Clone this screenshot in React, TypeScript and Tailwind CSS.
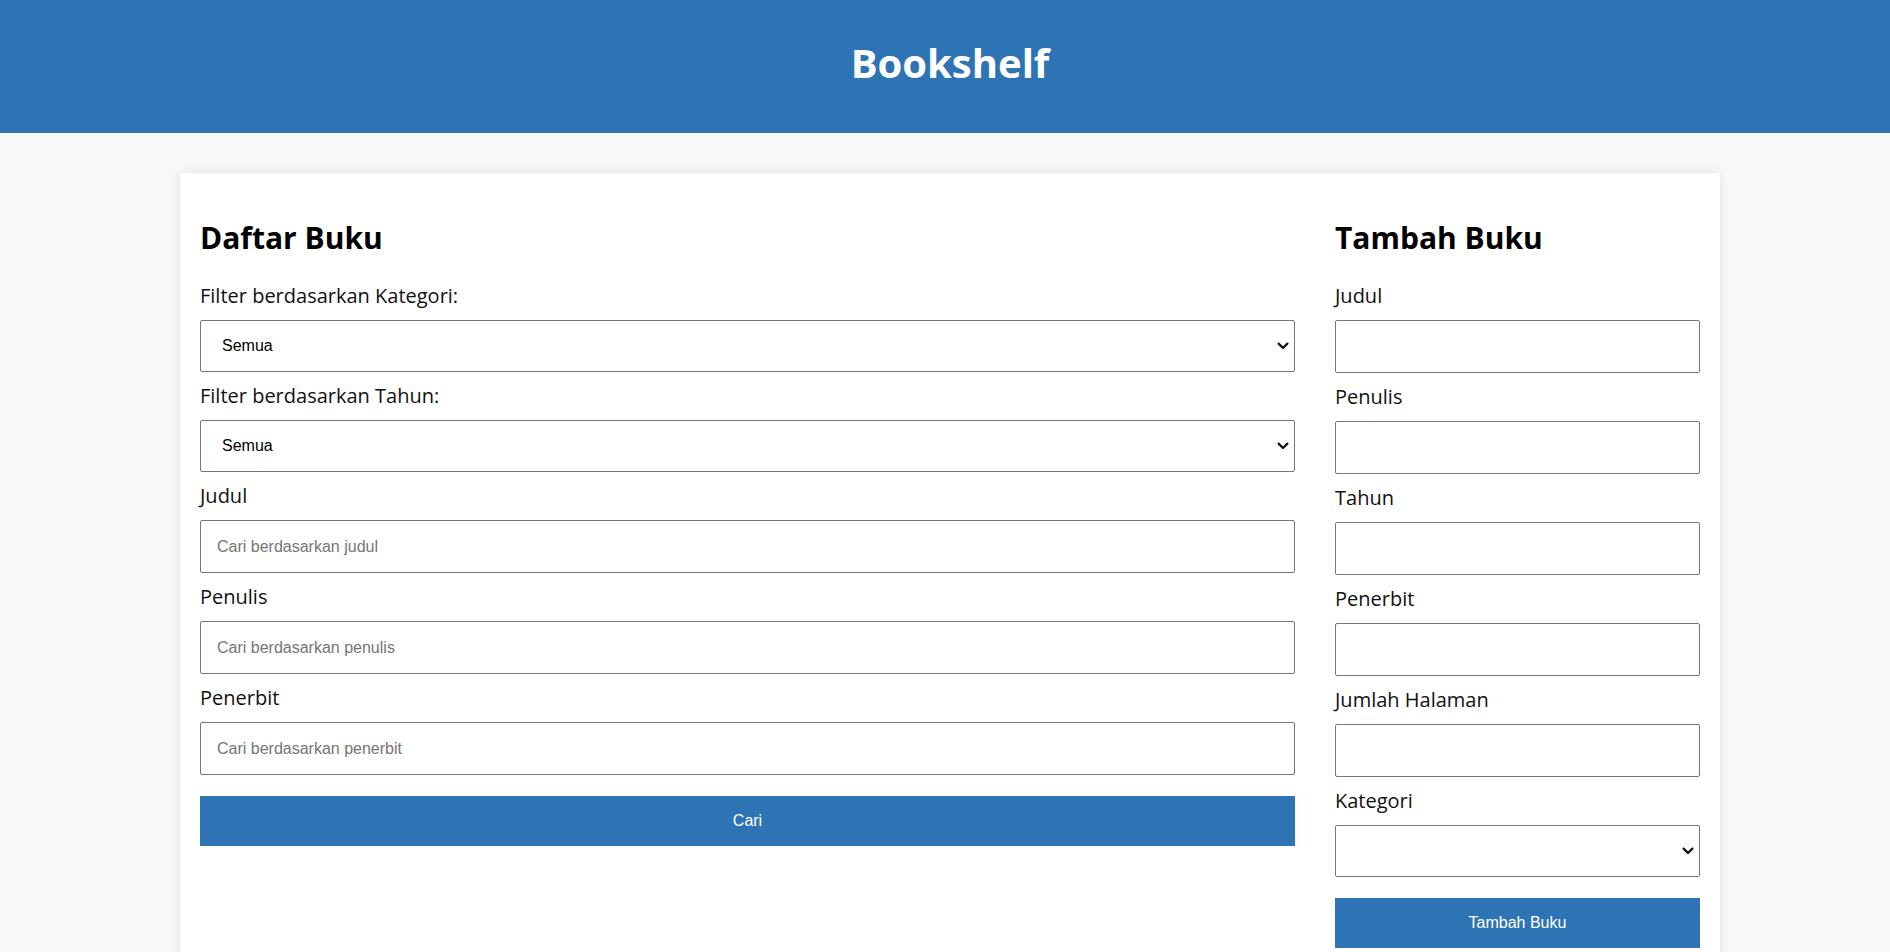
const inputCls =
  "block w-full h-[53px] px-[16px] rounded-[2px] border border-[#767676] bg-white text-[16px] text-black font-['Liberation_Sans',Arial,sans-serif] placeholder:text-[#757575] outline-none";
const labelCls = "block my-[10px] text-[20px] leading-[28px] text-[#111]";
const btnCls =
  "block w-full h-[50px] bg-[#2e74b5] text-white text-[16px] font-['Liberation_Sans',Arial,sans-serif]";

function Field({ label, placeholder }: { label: string; placeholder?: string }) {
  return (
    <div>
      <label className={labelCls}>{label}</label>
      <input type="text" placeholder={placeholder} className={inputCls} />
    </div>
  );
}

function Select({ label, value }: { label: string; value?: string }) {
  return (
    <div>
      <label className={labelCls}>{label}</label>
      <div className="relative">
        <select
          className="block w-full h-[52px] appearance-none pl-[21px] pr-[24px] rounded-[2px] border border-[#767676] bg-white text-[16px] text-black font-['Liberation_Sans',Arial,sans-serif] outline-none"
          defaultValue={value ?? ""}
        >
          <option value={value ?? ""}>{value ?? ""}</option>
        </select>
        <svg
          className="pointer-events-none absolute right-[6px] top-1/2 -translate-y-1/2"
          width="12"
          height="8"
          viewBox="0 0 12 8"
          fill="none"
        >
          <path d="M1.6 1.6 L6 6 L10.4 1.6" stroke="#111" strokeWidth="2.2" strokeLinecap="round" strokeLinejoin="round" />
        </svg>
      </div>
    </div>
  );
}

export default function App() {
  return (
    <div className="min-h-screen bg-[#f8f8f8] font-['Open_Sans',sans-serif]">
      <header className="h-[133px] bg-[#2e74b5] pt-[36px]">
        <div className="ml-[180px] w-[1540px] text-center">
          <h1 className="text-[40px] font-bold leading-[54px] text-white">Bookshelf</h1>
        </div>
      </header>

      <main className="ml-[180px] mt-[40px] w-[1540px] bg-white p-[20px] shadow-[0_0_10px_rgba(0,0,0,0.1)]">
        <div className="flex gap-[40px]">
          {/* daftar buku */}
          <section className="flex flex-[3] flex-col">
            <h2 className="mt-[25px] mb-[14px] text-[30px] font-bold leading-[40px] text-black">Daftar Buku</h2>
            <Select label="Filter berdasarkan Kategori:" value="Semua" />
            <Select label="Filter berdasarkan Tahun:" value="Semua" />
            <Field label="Judul" placeholder="Cari berdasarkan judul" />
            <Field label="Penulis" placeholder="Cari berdasarkan penulis" />
            <Field label="Penerbit" placeholder="Cari berdasarkan penerbit" />
            <button className={btnCls + " mt-[21px]"}>Cari</button>
          </section>

          {/* tambah buku */}
          <section className="flex flex-1 flex-col">
            <h2 className="mt-[25px] mb-[14px] text-[30px] font-bold leading-[40px] text-black">Tambah Buku</h2>
            <Field label="Judul" />
            <Field label="Penulis" />
            <Field label="Tahun" />
            <Field label="Penerbit" />
            <Field label="Jumlah Halaman" />
            <Select label="Kategori" />
            <button className={btnCls + " mt-[21px]"}>Tambah Buku</button>
          </section>
        </div>
      </main>
    </div>
  );
}
